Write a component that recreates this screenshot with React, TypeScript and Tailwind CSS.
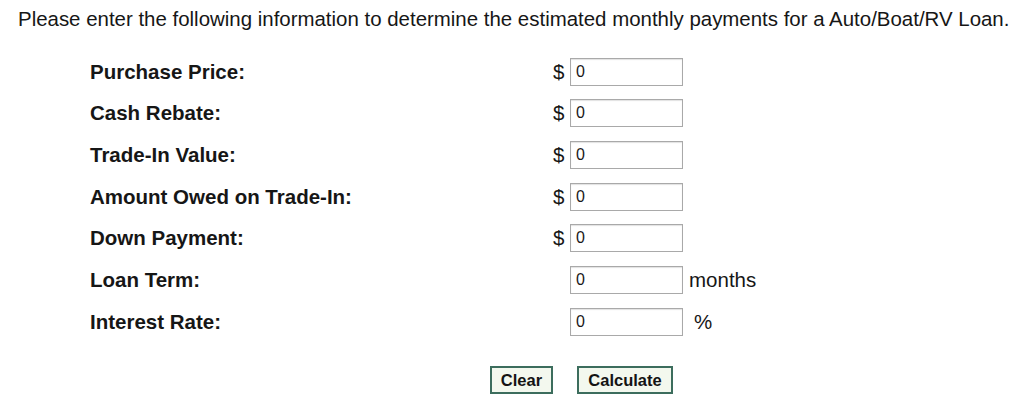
import { useState } from 'react';

const fields = [
  { key: 'price', label: 'Purchase Price:', prefix: true },
  { key: 'rebate', label: 'Cash Rebate:', prefix: true },
  { key: 'trade', label: 'Trade-In Value:', prefix: true },
  { key: 'owed', label: 'Amount Owed on Trade-In:', prefix: true },
  { key: 'down', label: 'Down Payment:', prefix: true },
  { key: 'term', label: 'Loan Term:', prefix: false, suffix: 'months' },
  { key: 'rate', label: 'Interest Rate:', prefix: false, suffix: '%' },
];

export default function App() {
  const initial = Object.fromEntries(fields.map(f => [f.key, '0']));
  const [values, setValues] = useState<Record<string, string>>(initial);

  return (
    <div className="w-[1024px] h-[409px] bg-white text-[#161616] font-['Liberation_Sans',Arial,sans-serif]">
      <p className="pl-[18px] pt-[7px] text-[20.45px] leading-[24px]">
        Please enter the following information to determine the estimated monthly payments for a Auto/Boat/RV Loan.
      </p>

      <div className="mt-[20px] pl-[90px]">
        {fields.map(f => (
          <div key={f.key} className="flex h-[41.67px] items-center text-[20.5px] leading-[24px]">
            <span className="w-[463px] font-bold">{f.label}</span>
            <span className="w-[17px]">{f.prefix ? '$' : ''}</span>
            <input
              type="text"
              value={values[f.key]}
              onChange={(e) => setValues({ ...values, [f.key]: e.target.value })}
              className="w-[113px] h-[28px] border border-[#a9a9a9] bg-white pl-[5px] text-[16px] text-[#1a1a1a] shadow-[inset_0_1px_1px_rgba(0,0,0,0.12)] focus:outline-none"
            />
            {f.suffix === 'months' && <span className="ml-[6px]">months</span>}
            {f.suffix === '%' && <span className="ml-[11px]">%</span>}
          </div>
        ))}
      </div>

      <div className="mt-[23px] flex gap-[24px] pl-[490px]">
        <button
          onClick={() => setValues(initial)}
          className="w-[63px] h-[28px] border-2 border-[#3c6d5d] bg-[#f3f8ee] text-[16.5px] font-bold text-[#141414]"
        >
          Clear
        </button>
        <button className="w-[96px] h-[28px] border-2 border-[#3c6d5d] bg-[#f3f8ee] text-[16.5px] font-bold text-[#141414]">
          Calculate
        </button>
      </div>
    </div>
  );
}
